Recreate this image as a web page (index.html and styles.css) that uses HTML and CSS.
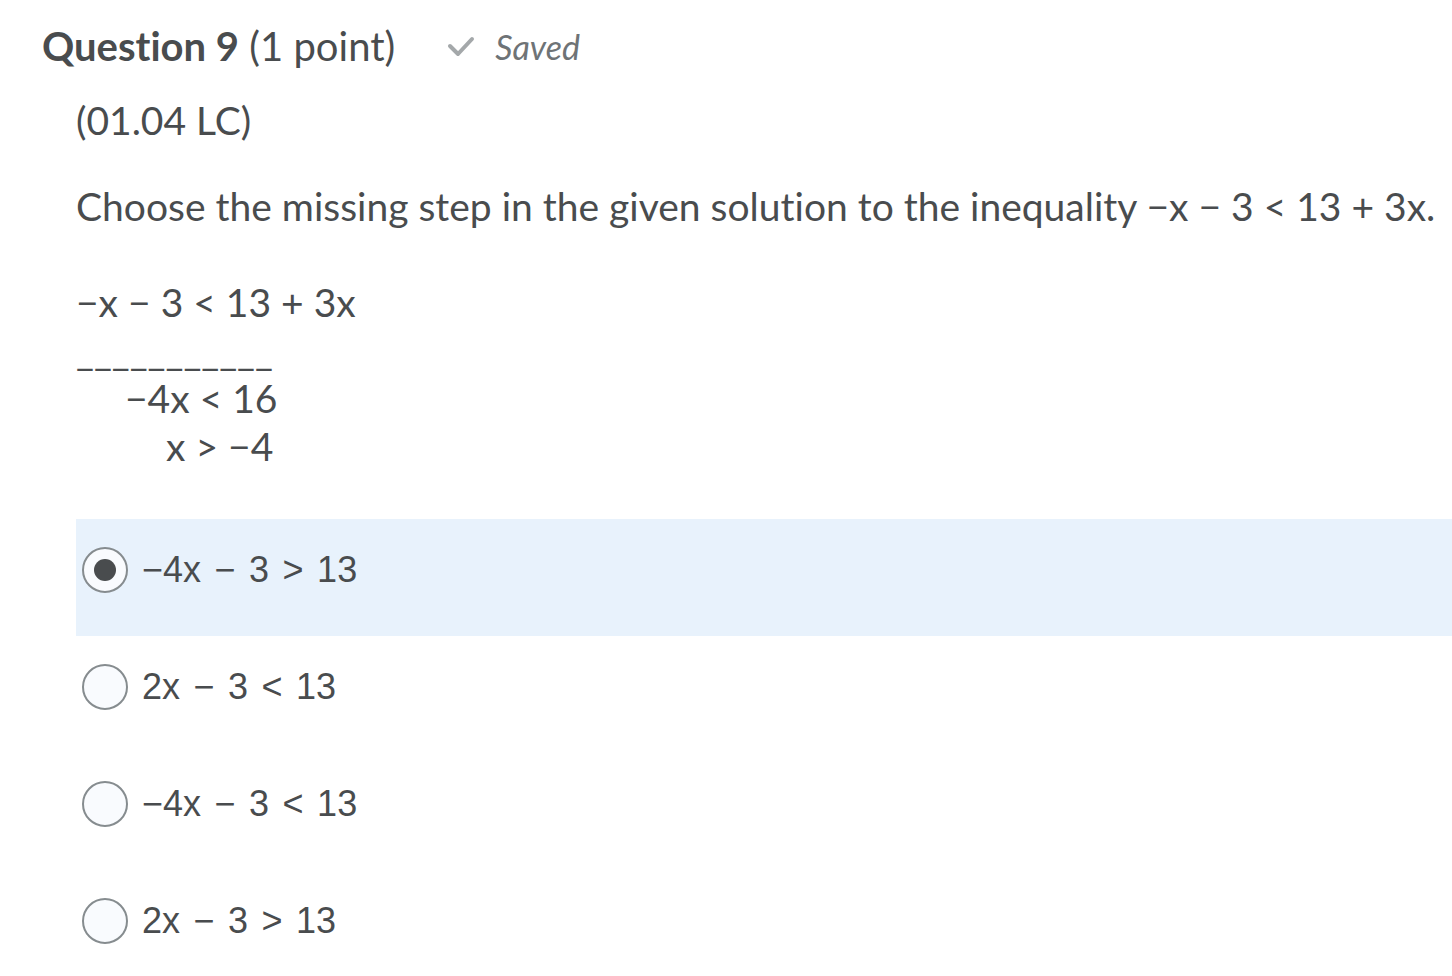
FILE: index.html
```html
<!DOCTYPE html>
<html>
<head>
<meta charset="utf-8">
<link rel="stylesheet" href="styles.css">
</head>
<body>
<div class="question">
  <div class="q-header">
    <h2 class="q-title"><strong>Question 9</strong> <span class="pts">(1 point)</span></h2>
    <div class="saved">
      <svg class="check" viewBox="0 0 28 22" width="28" height="22"><path d="M3 11 L11 19 L25 4" fill="none" stroke="#a4a8aa" stroke-width="4" stroke-linecap="round" stroke-linejoin="round"/></svg>
      <span>Saved</span>
    </div>
  </div>
  <div class="q-body">
    <p class="code">(01.04 LC)</p>
    <p class="prompt">Choose the missing step in the given solution to the inequality −x − 3 &lt; 13 + 3x.</p>
    <div class="steps">
      <div class="step">−x − 3 &lt; 13 + 3x</div>
      <div class="step">___________</div>
      <div class="step ind1">−4x &lt; 16</div>
      <div class="step ind2">x &gt; −4</div>
    </div>
    <div class="options">
      <label class="option selected"><span class="radio checked"></span><span class="opt-text">−4x − 3 &gt; 13</span></label>
      <label class="option"><span class="radio"></span><span class="opt-text">2x − 3 &lt; 13</span></label>
      <label class="option"><span class="radio"></span><span class="opt-text">−4x − 3 &lt; 13</span></label>
      <label class="option"><span class="radio"></span><span class="opt-text">2x − 3 &gt; 13</span></label>
    </div>
  </div>
</div>
</body>
</html>
```

FILE: styles.css
```css
html, body {
  margin: 0;
  padding: 0;
  background: #ffffff;
}
body {
  font-family: Lato, "Liberation Sans", sans-serif;
  font-variant-ligatures: none;
  color: #494c4e;
  overflow: hidden;
}
.question {
  padding: 20px 0 0 42px;
}
.q-header {
  display: flex;
  align-items: center;
  gap: 52px;
  height: 52px;
}
.q-title {
  margin: 0;
  font-size: 40px;
  font-weight: 400;
  line-height: 52px;
  white-space: nowrap;
}
.q-title strong {
  font-weight: 700;
}
.saved {
  display: flex;
  align-items: center;
  gap: 20px;
  font-style: italic;
  font-size: 34px;
  color: #6e7376;
}
.q-body {
  padding-left: 34px;
}
.code {
  margin: 24px 0 0 0;
  font-size: 39px;
  line-height: 48px;
}
.prompt {
  margin: 38px 0 0 0;
  font-size: 39px;
  line-height: 48px;
  white-space: nowrap;
}
.steps {
  margin-top: 48px;
  font-size: 39px;
  line-height: 48px;
}
.step {
  white-space: nowrap;
}
.ind1 { padding-left: 49px; }
.ind2 { padding-left: 90px; }
.options {
  margin-top: 49px;
  display: flex;
  flex-direction: column;
}
.option {
  box-sizing: border-box;
  display: flex;
  align-items: center;
  height: 117px;
  padding: 0 0 16px 6px;
  gap: 14px;
  font-family: "Liberation Sans", Arial, sans-serif;
  font-size: 36px;
  word-spacing: 3.5px;
}
.option.selected {
  background: #e8f2fc;
}
.radio {
  box-sizing: border-box;
  width: 46px;
  height: 46px;
  border-radius: 50%;
  border: 2px solid #868c8f;
  background: #f9fbfe;
  display: flex;
  align-items: center;
  justify-content: center;
  flex: none;
}
.radio.checked::after {
  content: "";
  width: 22px;
  height: 22px;
  border-radius: 50%;
  background: #494c4e;
}
```
